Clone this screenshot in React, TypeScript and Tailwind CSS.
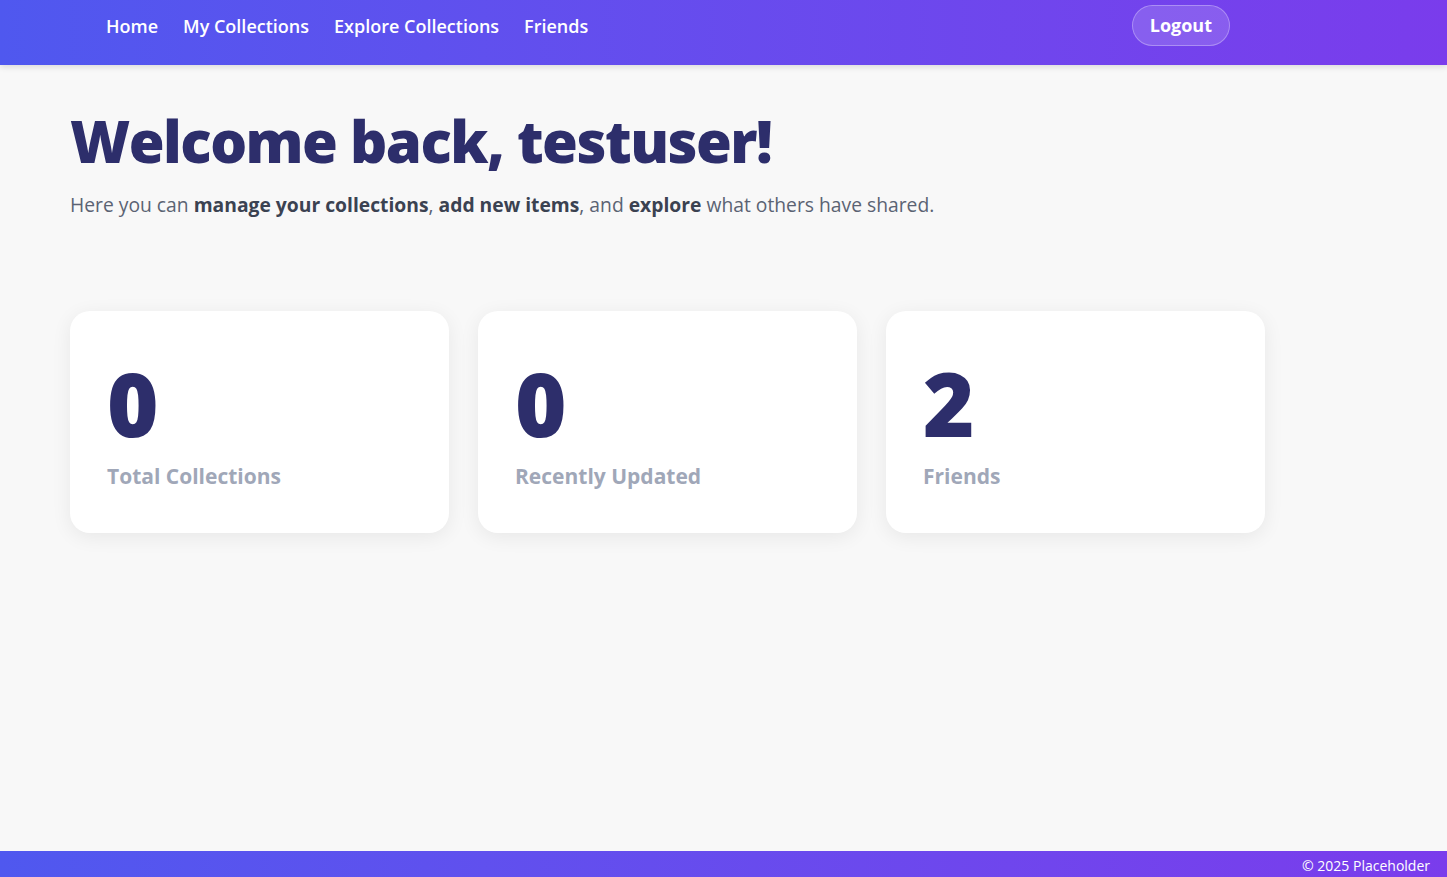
import React from "react";

const stats = [
  { value: "0", label: "Total Collections" },
  { value: "0", label: "Recently Updated" },
  { value: "2", label: "Friends" },
];

const App = () => {
  return (
    <div className="min-h-screen flex flex-col bg-[#f8f8f8] font-['Open_Sans',_'Noto_Sans',sans-serif]">
      <header className="h-[65px] bg-gradient-to-r from-[#4f58ef] to-[#7a3cec] shadow-[0_2px_6px_rgba(0,0,0,0.12)] flex items-start justify-between pt-[6px] pl-[106px] pr-[217px]">
        <nav className="h-[40px] flex items-center gap-[25px] text-white font-semibold text-[18px]">
          <a href="#">Home</a>
          <a href="#">My Collections</a>
          <a href="#">Explore Collections</a>
          <a href="#">Friends</a>
        </nav>
        <button className="-mt-[1px] h-[41px] px-[17px] rounded-full border border-white/30 bg-white/15 text-white font-bold text-[18px]">
          Logout
        </button>
      </header>

      <main className="flex-1 px-[70px] pt-[41px]">
        <h1 className="text-[58px] leading-[1.2] font-extrabold text-[#2d2e6b] tracking-[-1.5px]">
          Welcome back, testuser!
        </h1>
        <p className="mt-[15px] text-[19.3px] text-[#5b6373]">
          Here you can <strong className="font-bold text-[#3b4251]">manage your collections</strong>,{" "}
          <strong className="font-bold text-[#3b4251]">add new items</strong>, and{" "}
          <strong className="font-bold text-[#3b4251]">explore</strong> what others have shared.
        </p>

        <div className="mt-[91px] flex gap-[29px]">
          {stats.map((s) => (
            <div
              key={s.label}
              className="w-[379px] h-[222px] bg-white rounded-[20px] shadow-[0_4px_20px_rgba(0,0,0,0.07)] px-[37px] pt-[48px]"
            >
              <div className="text-[88px] leading-[1] font-extrabold text-[#2d2e6b]">{s.value}</div>
              <div className="mt-[14px] text-[21px] font-bold text-[#a0a7b8]">{s.label}</div>
            </div>
          ))}
        </div>
      </main>

      <footer className="h-[26px] bg-gradient-to-r from-[#4f58ef] to-[#7a3cec] flex items-center justify-end pt-[3px] pr-[17px] text-white text-[14px]">
        © 2025 Placeholder
      </footer>
    </div>
  );
};

export default App;
